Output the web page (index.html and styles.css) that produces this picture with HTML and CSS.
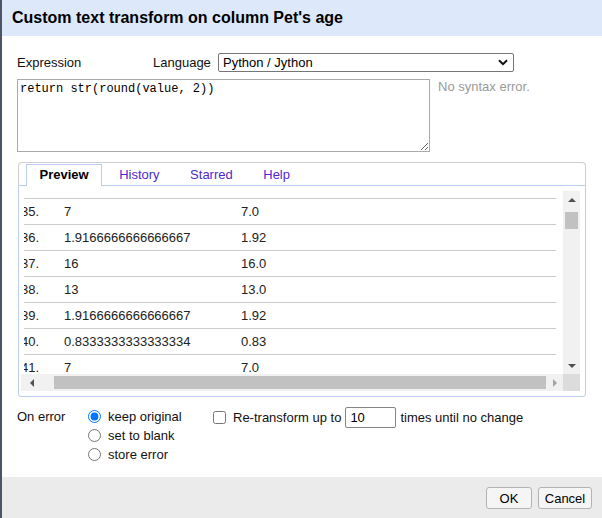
FILE: index.html
```html
<!DOCTYPE html>
<html>
<head>
<meta charset="utf-8">
<link rel="stylesheet" href="styles.css">
</head>
<body>
<div class="window">
  <div class="titlebar">Custom text transform on column Pet's age</div>
  <div class="content">
    <div class="expr-row">
      <span class="lbl-expr">Expression</span>
      <span class="lbl-lang">Language</span>
      <div class="select">
        <span>Python / Jython</span>
        <svg class="chev" width="10" height="7" viewBox="0 0 10 7"><path d="M1 1.2 L5 5.2 L9 1.2" fill="none" stroke="#111" stroke-width="2"/></svg>
      </div>
    </div>
    <div class="code-row">
      <textarea class="code" spellcheck="false">return str(round(value, 2))</textarea>
      <span class="status">No syntax error.</span>
    </div>
    <div class="tabs">
      <div class="tabbar">
        <span class="tab active">Preview</span>
        <span class="tab">History</span>
        <span class="tab">Starred</span>
        <span class="tab">Help</span>
      </div>
      <div class="tabpanel">
        <div class="scrollbox">
          <div class="viewport">
            <div class="clip">
              <div class="rows">
                <div class="spacer"></div>
                <div class="row"><span class="c-idx">35.</span><span class="c-val">7</span><span class="c-res">7.0</span></div>
                <div class="row"><span class="c-idx">36.</span><span class="c-val">1.9166666666666667</span><span class="c-res">1.92</span></div>
                <div class="row"><span class="c-idx">37.</span><span class="c-val">16</span><span class="c-res">16.0</span></div>
                <div class="row"><span class="c-idx">38.</span><span class="c-val">13</span><span class="c-res">13.0</span></div>
                <div class="row"><span class="c-idx">39.</span><span class="c-val">1.9166666666666667</span><span class="c-res">1.92</span></div>
                <div class="row"><span class="c-idx">40.</span><span class="c-val">0.8333333333333334</span><span class="c-res">0.83</span></div>
                <div class="row"><span class="c-idx">41.</span><span class="c-val">7</span><span class="c-res">7.0</span></div>
              </div>
            </div>
          </div>
          <div class="vbar">
            <div class="sbtn"><span class="tri-up"></span></div>
            <div class="vtrack"><div class="vthumb"></div></div>
            <div class="sbtn"><span class="tri-down"></span></div>
          </div>
          <div class="hbar">
            <div class="sbtn sbtn-left"><span class="tri-left"></span></div>
            <div class="htrack"><div class="hthumb"></div></div>
            <div class="sbtn"><span class="tri-right"></span></div>
          </div>
          <div class="corner"></div>
        </div>
      </div>
    </div>
    <div class="options">
      <span class="opt-label">On error</span>
      <div class="radios">
        <label class="radio-row"><input type="radio" name="onerr" checked><span>keep original</span></label>
        <label class="radio-row"><input type="radio" name="onerr"><span>set to blank</span></label>
        <label class="radio-row"><input type="radio" name="onerr"><span>store error</span></label>
      </div>
      <div class="retransform">
        <input type="checkbox" class="chk">
        <span>Re-transform up to</span>
        <input type="text" class="times" value="10">
        <span class="times-lbl">times until no change</span>
      </div>
    </div>
  </div>
  <div class="footer">
    <button class="btn btn-ok">OK</button>
    <button class="btn btn-cancel">Cancel</button>
  </div>
</div>
</body>
</html>
```
FILE: styles.css
```css
* { box-sizing: border-box; }
html, body { margin: 0; padding: 0; }
body {
  font-family: "Liberation Sans", Arial, sans-serif;
  font-size: 13px;
  color: #111;
  background: #fff;
}
.window {
  height: 518px;
  display: flex;
  flex-direction: column;
  border-left: 2px solid #4b5563;
}
.titlebar {
  height: 36px;
  line-height: 36px;
  background: #dde8fa;
  color: #000;
  font-size: 16px;
  font-weight: bold;
  padding-left: 10px;
}
.content {
  padding: 17px 16px 0 15px;
}
.expr-row {
  display: flex;
  align-items: center;
  height: 19px;
}
.lbl-expr { width: 136px; }
.lbl-lang { width: 65px; }
.select {
  width: 296px;
  height: 19px;
  border: 1px solid #767676;
  border-radius: 2px;
  padding: 0 5px 0 4px;
  display: flex;
  align-items: center;
  justify-content: space-between;
  color: #000;
}
.code-row {
  display: flex;
  align-items: flex-start;
  margin-top: 7px;
}
.code {
  display: block;
  width: 413px;
  height: 73px;
  margin: 0;
  border: 1px solid #aaa;
  padding: 2px 2px;
  font-family: "Liberation Mono", "DejaVu Sans Mono", monospace;
  font-size: 12px;
  line-height: 15px;
  color: #000;
  outline: none;
}
.status {
  margin-left: 8px;
  line-height: 15px;
  color: #9a9a9a;
}
.tabs {
  margin: 10px 0 0 1px;
}
.tabbar {
  height: 23px;
  display: flex;
  align-items: flex-end;
  padding-left: 7px;
  border: 1px solid #cfcfcf;
  border-bottom: none;
  border-radius: 4px 4px 0 0;
}
.tab {
  height: 21px;
  line-height: 19px;
  padding: 0 12.5px;
  margin-right: 3.5px;
  border: 1px solid transparent;
  border-bottom: none;
  color: #5028d0;
}
.tab.active {
  height: 22px;
  margin-bottom: -1px;
  position: relative;
  z-index: 1;
  background: #fff;
  border-color: #bccbf0;
  color: #000;
  font-weight: bold;
}
.tabpanel {
  border: 1px solid #bccbf0;
  border-radius: 0 0 3px 3px;
  padding: 5px 5px 5px 2px;
}
.scrollbox {
  display: grid;
  grid-template-columns: 1fr 17px;
  grid-template-rows: 1fr 17px;
  height: 200px;
}
.viewport {
  padding-left: 3px;
  min-width: 0;
  min-height: 0;
}
.clip {
  overflow: hidden;
  height: 100%;
}
.rows {
  margin-left: -3px;
  width: 535px;
  color: #222;
}
.spacer {
  height: 8px;
  border-bottom: 1px solid #cbcbcb;
}
.row {
  display: flex;
  height: 26px;
  line-height: 25px;
  border-bottom: 1px solid #cbcbcb;
  white-space: nowrap;
}
.c-idx { width: 43px; }
.c-val { width: 177px; }
.c-res { flex: 1; }
.vbar {
  background: #f1f1f1;
  display: flex;
  flex-direction: column;
}
.sbtn {
  width: 17px;
  height: 17px;
  flex: none;
  display: flex;
  align-items: center;
  justify-content: center;
}
.sbtn-left { padding-left: 4px; }
.vtrack {
  flex: 1;
  padding: 4px 2px 0 2px;
}
.vthumb {
  height: 17px;
  background: #c1c1c1;
}
.hbar {
  background: #f1f1f1;
  display: flex;
}
.htrack {
  flex: 1;
  display: flex;
  padding: 2px 0 2px 16px;
}
.hthumb {
  flex: 1;
  background: #c1c1c1;
}
.corner { background: #dcdcdc; }
.tri-up {
  width: 0; height: 0;
  border-left: 4px solid transparent;
  border-right: 4px solid transparent;
  border-bottom: 4px solid #505050;
}
.tri-down {
  width: 0; height: 0;
  border-left: 4px solid transparent;
  border-right: 4px solid transparent;
  border-top: 4px solid #505050;
}
.tri-left {
  width: 0; height: 0;
  border-top: 4px solid transparent;
  border-bottom: 4px solid transparent;
  border-right: 4px solid #505050;
}
.tri-right {
  width: 0; height: 0;
  border-top: 4px solid transparent;
  border-bottom: 4px solid transparent;
  border-left: 4px solid #a3a3a3;
}
.options {
  display: flex;
  align-items: flex-start;
  margin-top: 10px;
}
.opt-label {
  width: 71px;
  line-height: 19px;
}
.radios {
  width: 125px;
  display: flex;
  flex-direction: column;
}
.radio-row {
  display: flex;
  align-items: center;
  height: 19px;
}
.radio-row input {
  width: 13px;
  height: 13px;
  margin: 0 7px 0 0;
}
.retransform {
  display: flex;
  align-items: center;
  height: 19px;
  margin-top: 1px;
}
.chk {
  width: 13px;
  height: 13px;
  margin: 0 7px 0 0;
}
.times {
  width: 51px;
  height: 21px;
  margin: 0 0 0 4px;
  border: 1px solid #858585;
  border-radius: 2px;
  padding: 0 4px;
  font-family: "Liberation Sans", Arial, sans-serif;
  font-size: 13px;
  color: #000;
}
.times-lbl { margin-left: 4px; }
.footer {
  margin-top: auto;
  height: 41px;
  background: #ebebeb;
  display: flex;
  justify-content: flex-end;
  align-items: flex-start;
  gap: 6px;
  padding: 10px 10px 0 0;
}
.btn {
  height: 22px;
  border: 1px solid #b3b3b3;
  border-radius: 3px;
  background: #f5f5f5;
  font-family: "Liberation Sans", Arial, sans-serif;
  font-size: 13px;
  color: #000;
  padding: 0;
}
.btn-ok { width: 46px; }
.btn-cancel { width: 54px; }
```
